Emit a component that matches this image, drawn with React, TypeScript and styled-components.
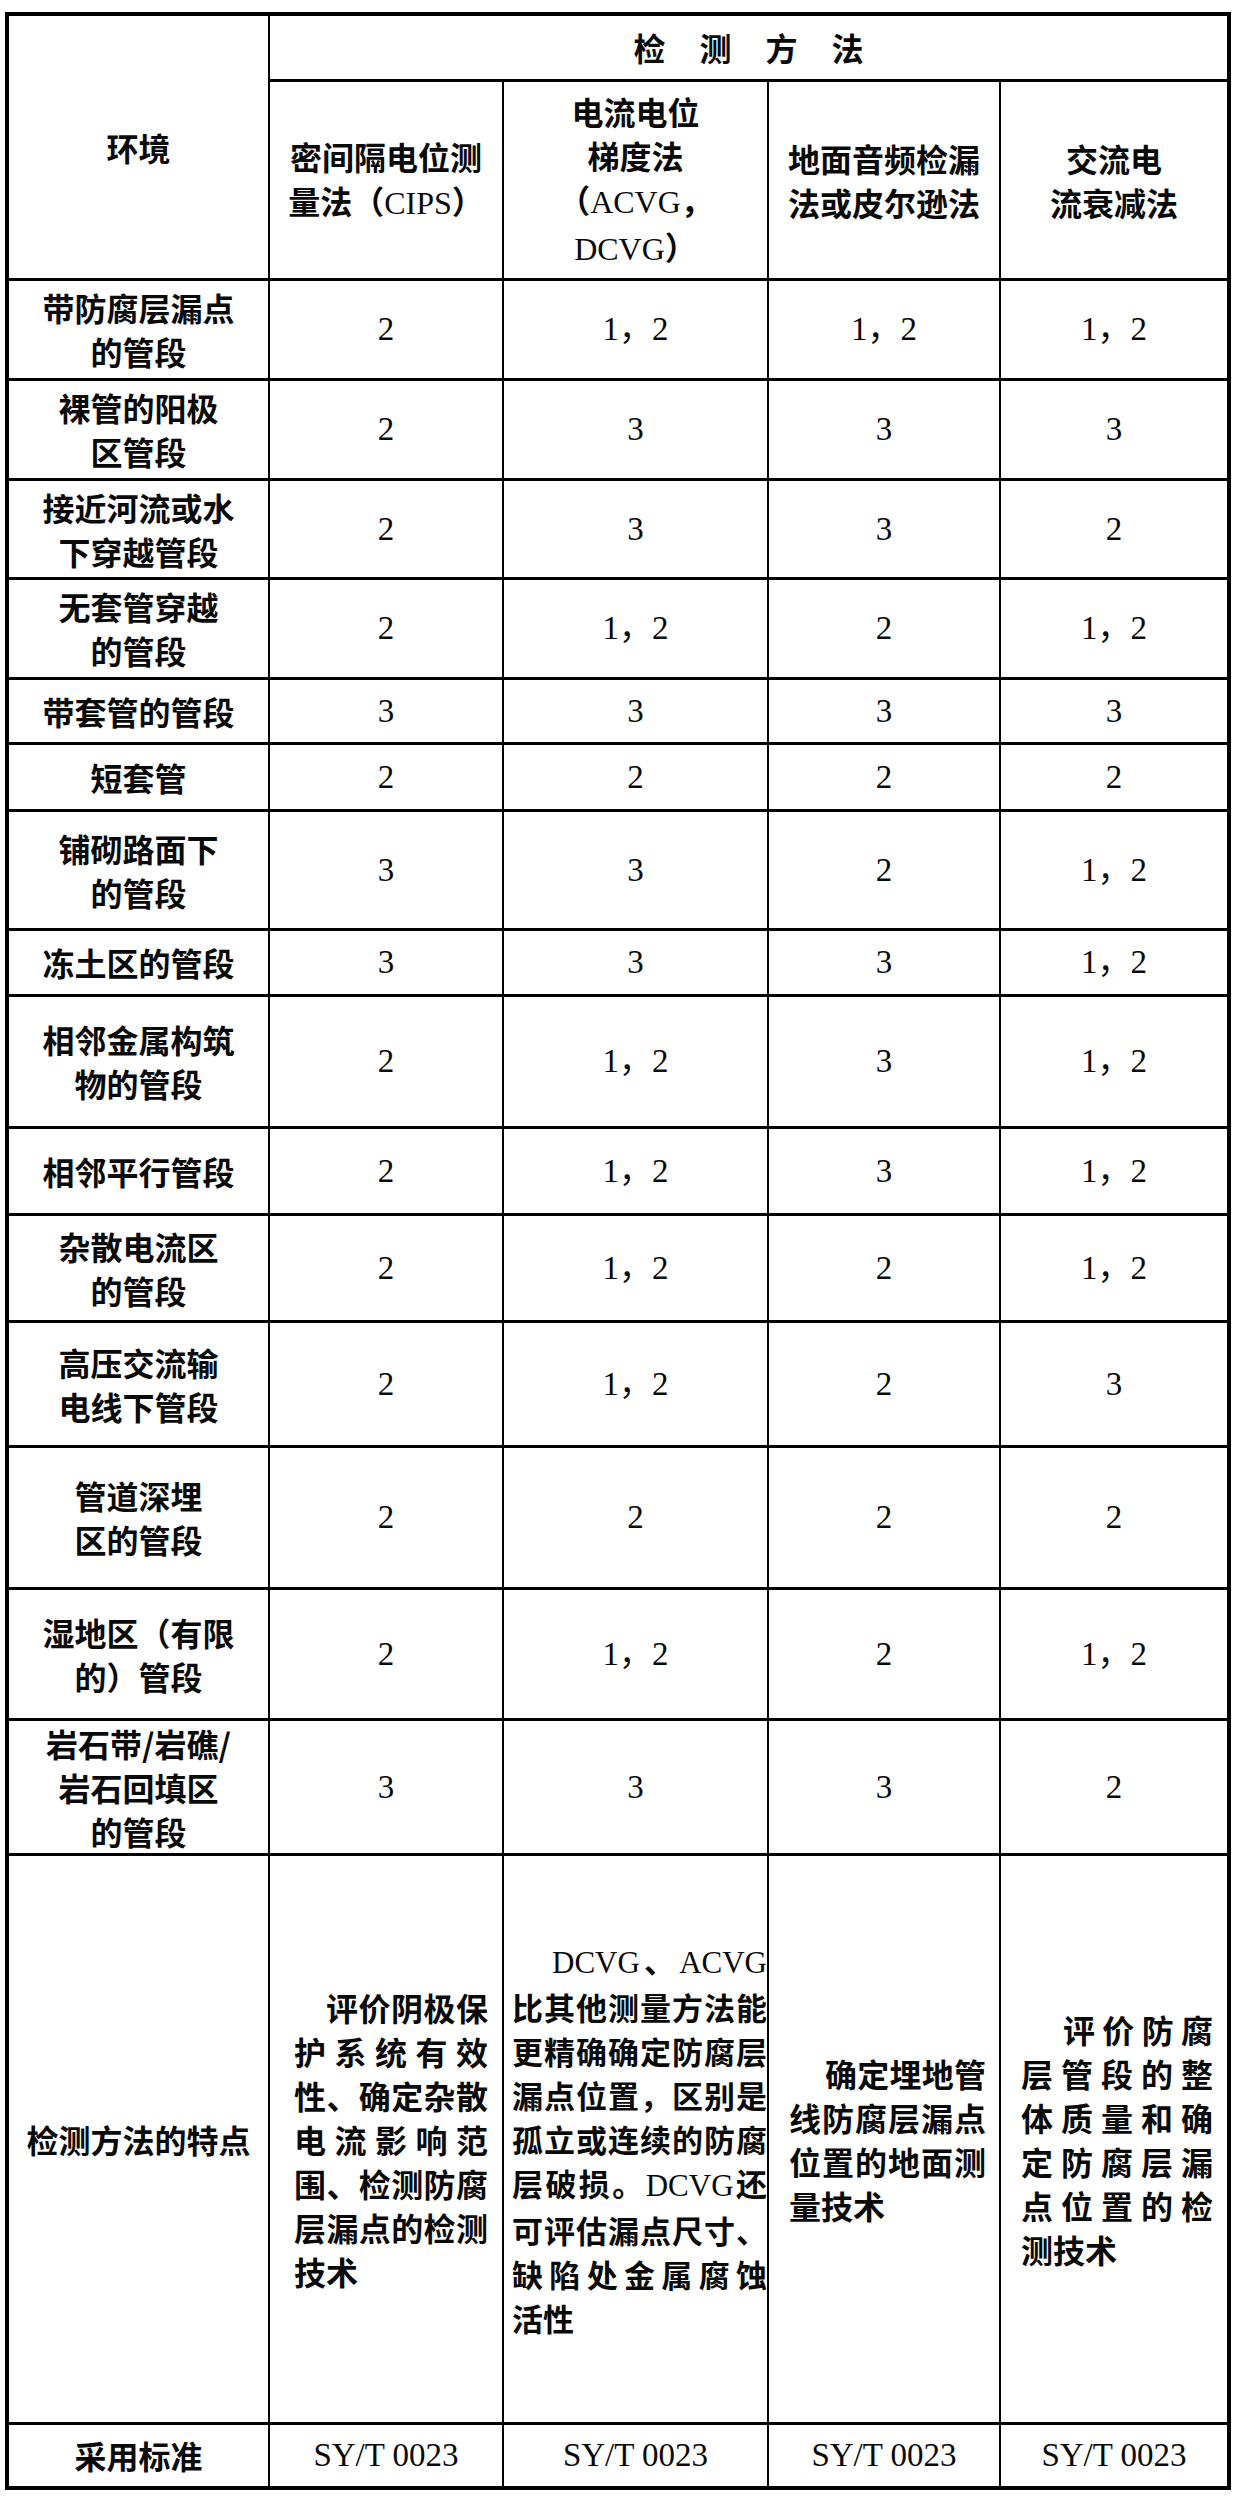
import React from "react";
import styled, { createGlobalStyle } from "styled-components";

const GlobalStyle = createGlobalStyle`
  html, body {
    margin: 0;
    padding: 0;
    background: #ffffff;
  }
  body {
    width: 1236px;
  }
`;

const Page = styled.div`
  padding: 12px 0 10px 5px;
`;

const Table = styled.table`
  border-collapse: collapse;
  table-layout: fixed;
  width: 1224px;
  border: 4px solid #000;
  color: #0a0a0a;
  font-family: "Noto Sans CJK SC", "Noto Sans", sans-serif;
  font-weight: 700;
  font-size: 32px;
  line-height: 44px;
`;

const Row = styled.tr<{ $h: number }>`
  height: ${(p) => p.$h}px;
`;

const Cell = styled.td`
  border-left: 2px solid #000;
  border-right: 2px solid #000;
  border-top: 3px solid #000;
  border-bottom: 3px solid #000;
  padding: 0;
  text-align: center;
  vertical-align: middle;
  white-space: nowrap;
`;

const TitleCell = styled(Cell)`
  letter-spacing: 34px;
  padding-left: 34px;
`;

const NumCell = styled(Cell)`
  font-family: "Liberation Serif", "Noto Sans CJK SC", serif;
  font-weight: 400;
  font-size: 33px;
`;

const StdCell = styled(Cell)`
  font-family: "Liberation Serif", serif;
  font-weight: 400;
  font-size: 33px;
`;

const FeatureCell = styled(Cell)<{ $pl: number; $pr: number; $size: number }>`
  white-space: normal;
  text-align: left;
  font-size: ${(p) => p.$size}px;
  padding: 0 ${(p) => p.$pr}px 0 ${(p) => p.$pl}px;
`;

const Line = styled.div<{ $fill?: boolean; $indent?: number }>`
  display: block;
  white-space: nowrap;
  text-align: ${(p) => (p.$fill ? "justify" : "left")};
  text-align-last: ${(p) => (p.$fill ? "justify" : "left")};
  text-justify: inter-character;
  padding-left: ${(p) => p.$indent ?? 0}px;
`;

const Latin = styled.span`
  font-family: "Liberation Serif", serif;
  font-weight: 400;
`;

function mixed(text: string) {
  return text
    .split(/([A-Za-z0-9/ .]+)/)
    .filter((s) => s.length > 0)
    .map((s, i) =>
      /[A-Za-z0-9]/.test(s) ? (
        <Latin key={i}>{s}</Latin>
      ) : (
        <React.Fragment key={i}>{s}</React.Fragment>
      )
    );
}

function Lines({ items }: { items: string[] }) {
  return (
    <>
      {items.map((t, i) => (
        <div key={i}>{mixed(t)}</div>
      ))}
    </>
  );
}

const colWidths = [262, 234, 265, 232, 229];

type DataRow = { env: string[]; v: string[]; h: number };

const rows: DataRow[] = [
  { env: ["带防腐层漏点", "的管段"], v: ["2", "1，2", "1，2", "1，2"], h: 100 },
  { env: ["裸管的阳极", "区管段"], v: ["2", "3", "3", "3"], h: 100 },
  { env: ["接近河流或水", "下穿越管段"], v: ["2", "3", "3", "2"], h: 99 },
  { env: ["无套管穿越", "的管段"], v: ["2", "1，2", "2", "1，2"], h: 100 },
  { env: ["带套管的管段"], v: ["3", "3", "3", "3"], h: 65 },
  { env: ["短套管"], v: ["2", "2", "2", "2"], h: 67 },
  { env: ["铺砌路面下", "的管段"], v: ["3", "3", "2", "1，2"], h: 119 },
  { env: ["冻土区的管段"], v: ["3", "3", "3", "1，2"], h: 66 },
  { env: ["相邻金属构筑", "物的管段"], v: ["2", "1，2", "3", "1，2"], h: 132 },
  { env: ["相邻平行管段"], v: ["2", "1，2", "3", "1，2"], h: 87 },
  { env: ["杂散电流区", "的管段"], v: ["2", "1，2", "2", "1，2"], h: 107 },
  { env: ["高压交流输", "电线下管段"], v: ["2", "1，2", "2", "3"], h: 125 },
  { env: ["管道深埋", "区的管段"], v: ["2", "2", "2", "2"], h: 142 },
  { env: ["湿地区（有限", "的）管段"], v: ["2", "1，2", "2", "1，2"], h: 131 },
  { env: ["岩石带/岩礁/", "岩石回填区", "的管段"], v: ["3", "3", "3", "2"], h: 134 },
];

type Feature = { pl: number; pr: number; indent: number; size: number; lines: string[] };

const features: Feature[] = [
  {
    pl: 24,
    pr: 14,
    indent: 32,
    size: 32,
    lines: ["评价阴极保", "护系统有效", "性、确定杂散", "电流影响范", "围、检测防腐", "层漏点的检测", "技术"],
  },
  {
    pl: 8,
    pr: 0,
    indent: 40,
    size: 31,
    lines: [
      "DCVG、ACVG",
      "比其他测量方法能",
      "更精确确定防腐层",
      "漏点位置，区别是",
      "孤立或连续的防腐",
      "层破损。DCVG还",
      "可评估漏点尺寸、",
      "缺陷处金属腐蚀",
      "活性",
    ],
  },
  {
    pl: 20,
    pr: 13,
    indent: 36,
    size: 32,
    lines: ["确定埋地管", "线防腐层漏点", "位置的地面测", "量技术"],
  },
  {
    pl: 20,
    pr: 14,
    indent: 42,
    size: 32,
    lines: ["评价防腐", "层管段的整", "体质量和确", "定防腐层漏", "点位置的检", "测技术"],
  },
];

const headers: string[][] = [
  ["密间隔电位测", "量法（CIPS）"],
  ["电流电位", "梯度法", "（ACVG，", "DCVG）"],
  ["地面音频检漏", "法或皮尔逊法"],
  ["交流电", "流衰减法"],
];

export default function App() {
  return (
    <Page>
      <GlobalStyle />
      <Table>
        <colgroup>
          {colWidths.map((w, i) => (
            <col key={i} style={{ width: w }} />
          ))}
        </colgroup>
        <tbody>
          <Row $h={66}>
            <Cell rowSpan={2}>环境</Cell>
            <TitleCell colSpan={4}>检测方法</TitleCell>
          </Row>
          <Row $h={199}>
            {headers.map((h, i) => (
              <Cell key={i}>
                <Lines items={h} />
              </Cell>
            ))}
          </Row>
          {rows.map((r, i) => (
            <Row key={i} $h={r.h}>
              <Cell>
                <Lines items={r.env} />
              </Cell>
              {r.v.map((v, j) => (
                <NumCell key={j}>{v}</NumCell>
              ))}
            </Row>
          ))}
          <Row $h={569}>
            <Cell>检测方法的特点</Cell>
            {features.map((f, i) => (
              <FeatureCell key={i} $pl={f.pl} $pr={f.pr} $size={f.size}>
                {f.lines.map((t, j) => (
                  <Line key={j} $fill={j < f.lines.length - 1} $indent={j === 0 ? f.indent : 0}>
                    {mixed(t)}
                  </Line>
                ))}
              </FeatureCell>
            ))}
          </Row>
          <Row $h={65}>
            <Cell>采用标准</Cell>
            {[0, 1, 2, 3].map((i) => (
              <StdCell key={i}>SY/T 0023</StdCell>
            ))}
          </Row>
        </tbody>
      </Table>
    </Page>
  );
}
